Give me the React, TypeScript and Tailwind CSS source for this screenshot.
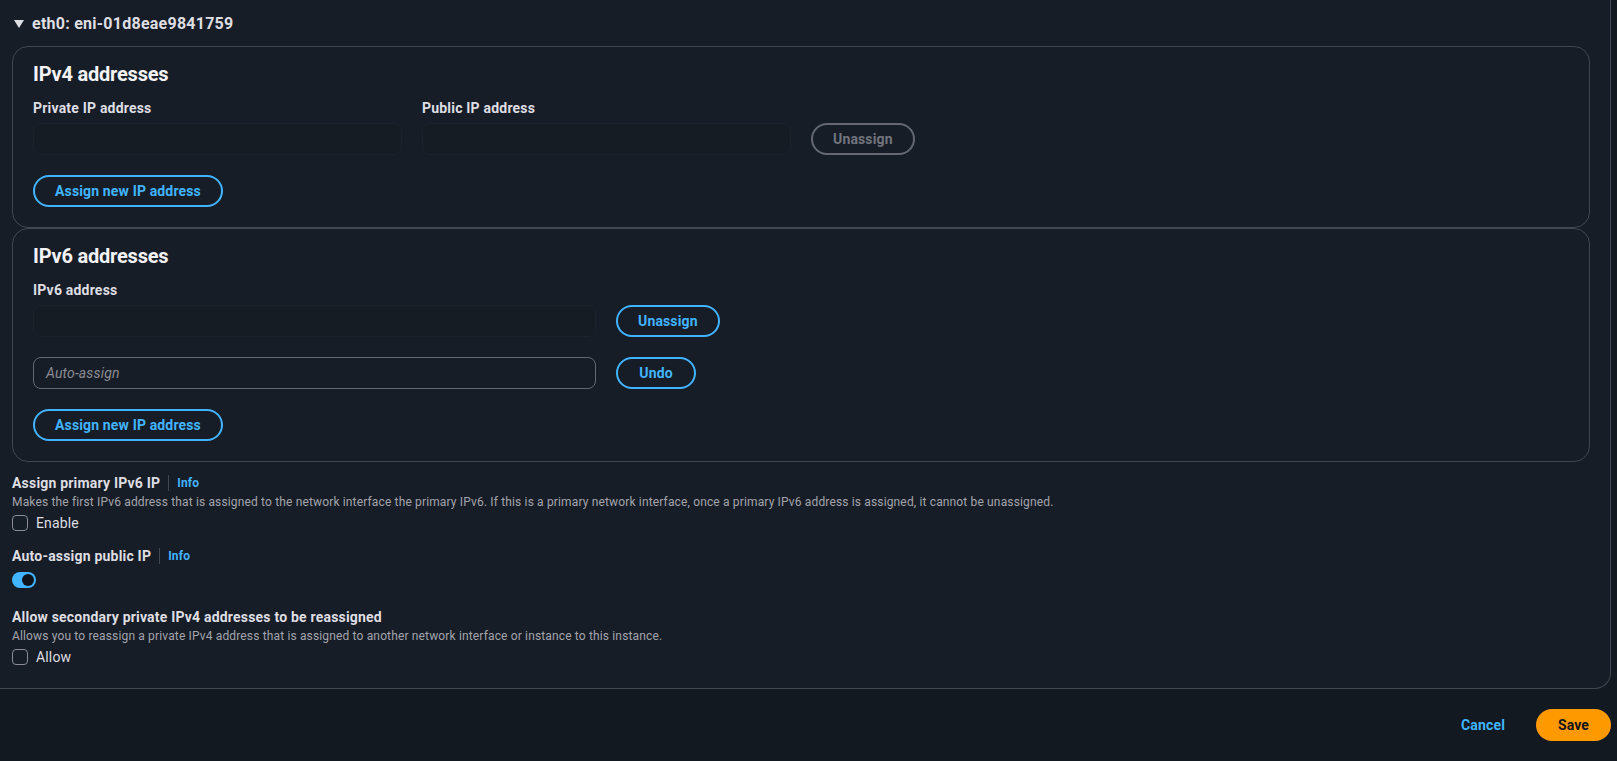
import { useState } from "react"

function Button({ children, disabled, className = "" }: { children: string; disabled?: boolean; className?: string }) {
  return (
    <button
      className={`${className} ${
        disabled
          ? "h-8 px-[20px] rounded-full border-2 border-[#656871] text-[#72747e] text-[14px] font-bold leading-none"
          : "h-8 px-[20px] rounded-full border-2 border-[#42b4ff] text-[#42b4ff] text-[14px] font-bold leading-none"
      }`}
    >
      {children}
    </button>
  )
}

function DisabledInput({ width }: { width: string }) {
  return <div className={`h-8 rounded-lg border border-[#1b222b] bg-[#151c24] ${width}`} />
}

function Label({ children }: { children: string }) {
  return <div className="text-[14px] leading-5 font-bold tracking-[0.2px] text-[#dedee3]">{children}</div>
}

function Info() {
  return (
    <div className="ml-2 pl-2 border-l border-[#424650] h-4 flex items-center text-[12px] font-bold text-[#42b4ff]">
      Info
    </div>
  )
}

function Check({ label }: { label: string }) {
  return (
    <div className="flex items-center gap-2 h-5">
      <span className="w-4 h-4 rounded-[4px] border border-[#8c8c94]" />
      <span className="text-[14px] text-[#dedee3]">{label}</span>
    </div>
  )
}

export default function App() {
  const [on] = useState(true)
  return (
    <div className="h-[761px] w-full overflow-hidden bg-[#131920] tracking-[0.15px] font-['Roboto',sans-serif]">
      <div className="ml-[-20px] w-[1631px] h-[689px] pl-[32px] pr-[20px] rounded-b-2xl border-b border-r border-[#424650] bg-[#161d26]">
        <div className="h-[46px] pt-[2px] flex items-center gap-2">
          <svg className="ml-[2px]" width="10" height="8" viewBox="0 0 10 8">
            <path d="M0 0h10L5 8z" fill="#dedee3" />
          </svg>
          <span className="text-[16px] font-bold tracking-[0.25px] text-[#dedee3]">eth0: eni-01d8eae9841759</span>
        </div>

        <section className="h-[182px] rounded-2xl border border-[#424650] pl-[20px] pt-[13px]">
          <h2 className="text-[20px] leading-7 font-bold tracking-[-0.2px] text-[#f3f3f7]">IPv4 addresses</h2>
          <div className="mt-[10px] flex items-end gap-5">
            <div>
              <Label>Private IP address</Label>
              <div className="mt-[5px]"><DisabledInput width="w-[369px]" /></div>
            </div>
            <div>
              <Label>Public IP address</Label>
              <div className="mt-[5px]"><DisabledInput width="w-[369px]" /></div>
            </div>
            <Button disabled>Unassign</Button>
          </div>
          <div className="mt-5"><Button>Assign new IP address</Button></div>
        </section>

        <section className="h-[234px] rounded-2xl border border-[#424650] pl-[20px] pt-[13px]">
          <h2 className="text-[20px] leading-7 font-bold tracking-[-0.2px] text-[#f3f3f7]">IPv6 addresses</h2>
          <div className="mt-[10px]"><Label>IPv6 address</Label></div>
          <div className="mt-[5px] flex gap-5">
            <DisabledInput width="w-[563px]" />
            <Button>Unassign</Button>
          </div>
          <div className="mt-5 flex gap-5">
            <div className="w-[563px] h-8 rounded-lg border border-[#656871] bg-[#161d26] px-3 flex items-center text-[14px] italic text-[#8c8c94]">
              Auto-assign
            </div>
            <Button className="min-w-[80px]">Undo</Button>
          </div>
          <div className="mt-5"><Button>Assign new IP address</Button></div>
        </section>

        <div className="mt-[11px]">
          <div className="flex items-center h-5">
            <Label>Assign primary IPv6 IP</Label>
            <Info />
          </div>
          <p className="text-[12px] leading-4 mt-[1px] text-[#a4a4ad]">
            Makes the first IPv6 address that is assigned to the network interface the primary IPv6. If this is a primary network interface, once a primary IPv6 address is assigned, it cannot be unassigned.
          </p>
          <div className="mt-[3px]"><Check label="Enable" /></div>

          <div className="flex items-center h-5 mt-[13px]">
            <Label>Auto-assign public IP</Label>
            <Info />
          </div>
          <div className={`mt-[6px] w-[24px] h-4 rounded-full bg-[#42b4ff] flex items-center ${on ? "justify-end" : ""} pr-[2px]`}>
            <span className="w-3 h-3 rounded-full bg-[#0f141a]" />
          </div>

          <div className="mt-[19px]"><Label>Allow secondary private IPv4 addresses to be reassigned</Label></div>
          <p className="text-[12px] leading-4 mt-[1px] text-[#a4a4ad]">
            Allows you to reassign a private IPv4 address that is assigned to another network interface or instance to this instance.
          </p>
          <div className="mt-[3px]"><Check label="Allow" /></div>
        </div>
      </div>

      <div className="mt-5 flex items-center justify-end pr-[6px] gap-[31px]">
        <span className="text-[14px] font-bold text-[#42b4ff]">Cancel</span>
        <button className="h-8 w-[75px] rounded-full bg-[#ff9900] text-[14px] font-bold text-[#0f141a]">Save</button>
      </div>
    </div>
  )
}
